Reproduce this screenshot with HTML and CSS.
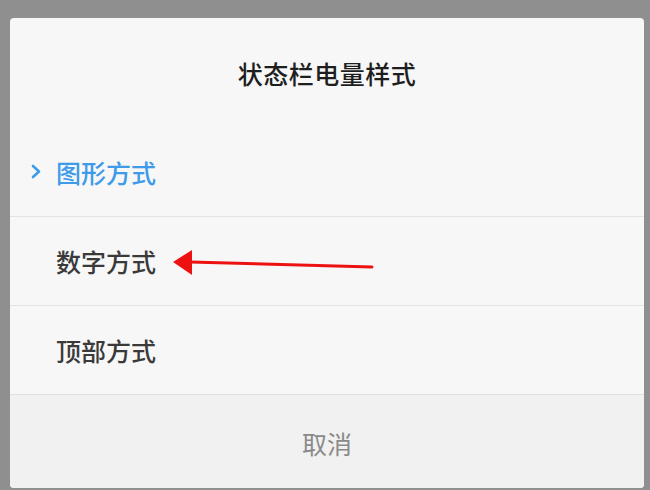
FILE: index.html
```html
<!DOCTYPE html>
<html lang="zh-CN">
<head>
<meta charset="utf-8">
<title>状态栏电量样式</title>
<link rel="stylesheet" href="styles.css">
</head>
<body>
<div class="dialog">
  <div class="title">状态栏电量样式</div>
  <div class="item selected">
    <svg class="chev" width="10" height="15" viewBox="0 0 10 15"><path d="M2 2 L8 7.5 L2 13" fill="none" stroke="#3d9be9" stroke-width="2.6" stroke-linecap="round" stroke-linejoin="round"/></svg>
    <span>图形方式</span>
  </div>
  <div class="item">
    <span>数字方式</span>
    <svg class="arrow" width="210" height="30" viewBox="0 0 210 30">
      <path d="M18 12 L200 17" stroke="#ee1111" stroke-width="3" stroke-linecap="round"/>
      <polygon points="1,12 20,0 20,25" fill="#ee1111"/>
    </svg>
  </div>
  <div class="item">
    <span>顶部方式</span>
  </div>
  <div class="cancel">取消</div>
</div>
</body>
</html>
```

FILE: styles.css
```css
html, body {
  margin: 0;
  padding: 0;
}
body {
  width: 650px;
  height: 490px;
  background: #8f8f8f;
  overflow: hidden;
  font-family: "Noto Sans CJK SC", "Noto Sans", sans-serif;
}
.dialog {
  margin: 18px 0 0 10px;
  width: 634px;
  height: 470px;
  background: #f7f7f7;
  border-radius: 4px;
  display: flex;
  flex-direction: column;
  overflow: hidden;
}
.title {
  height: 110px;
  display: flex;
  align-items: center;
  justify-content: center;
  font-size: 25px;
  font-weight: 500;
  color: #1e1e1e;
  letter-spacing: 0.5px;
}
.item {
  position: relative;
  height: 88px;
  display: flex;
  align-items: center;
  padding-left: 46px;
  font-size: 25px;
  font-weight: 500;
  color: #3a3a3a;
}
.item + .item {
  border-top: 1px solid #e3e3e3;
}
.item.selected {
  color: #3d9be9;
}
.chev {
  position: absolute;
  left: 21px;
  top: 36px;
}
.arrow {
  position: absolute;
  left: 162px;
  top: 33px;
}
.cancel {
  flex: 1;
  border-top: 1px solid #e0e0e0;
  background: #f1f1f1;
  display: flex;
  align-items: center;
  justify-content: center;
  font-size: 25px;
  color: #8a8a8a;
  padding-top: 3px;
}
```
